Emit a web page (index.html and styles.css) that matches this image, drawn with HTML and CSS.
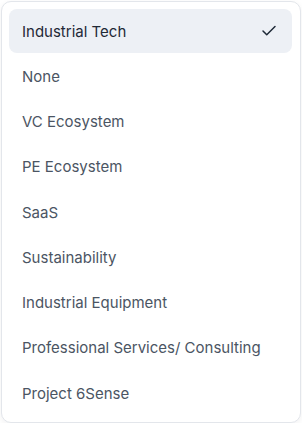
FILE: index.html
```html
<!DOCTYPE html>
<html lang="en">
<head>
    <meta charset="UTF-8">
    <meta name="viewport" content="width=device-width, initial-scale=1.0">
    <title>Industry Select</title>
    <link rel="stylesheet" href="styles.css">
</head>
<body>

<div class="menu" role="listbox">
    <div class="option selected" role="option">
        <span>Industrial Tech</span>
        <svg class="check" width="18" height="18" viewBox="0 0 24 24" fill="none" stroke="currentColor" stroke-width="2" stroke-linecap="round" stroke-linejoin="round"><path d="M20 6 9 17l-5-5"/></svg>
    </div>
    <div class="option" role="option"><span>None</span></div>
    <div class="option" role="option"><span>VC Ecosystem</span></div>
    <div class="option" role="option"><span>PE Ecosystem</span></div>
    <div class="option" role="option"><span>SaaS</span></div>
    <div class="option" role="option"><span>Sustainability</span></div>
    <div class="option" role="option"><span>Industrial Equipment</span></div>
    <div class="option" role="option"><span>Professional Services/ Consulting</span></div>
    <div class="option" role="option"><span>Project 6Sense</span></div>
</div>

</body>
</html>
```

FILE: styles.css
```css
/* Base */
body { margin: 0; background: #fff; font-family: Inter, "Noto Sans", sans-serif; }

/* Dropdown menu */
.menu { box-sizing: border-box; width: 300px; margin: 1px 0 0 1px; padding: 7px 8px 7px 7px; background: #fff; border: 1px solid #e3e6eb; border-radius: 10px; box-shadow: 0 2px 6px rgba(15, 23, 42, 0.06); display: flex; flex-direction: column; gap: 1.25px; }

/* Options */
.option { height: 44px; display: flex; align-items: center; justify-content: space-between; padding: 0 14px 0 13px; border-radius: 8px; font-size: 15px; color: #4b5563; }
.option.selected { background: #edf0f5; color: #1f2937; }
.check { color: #1f2937; flex: none; }
```
